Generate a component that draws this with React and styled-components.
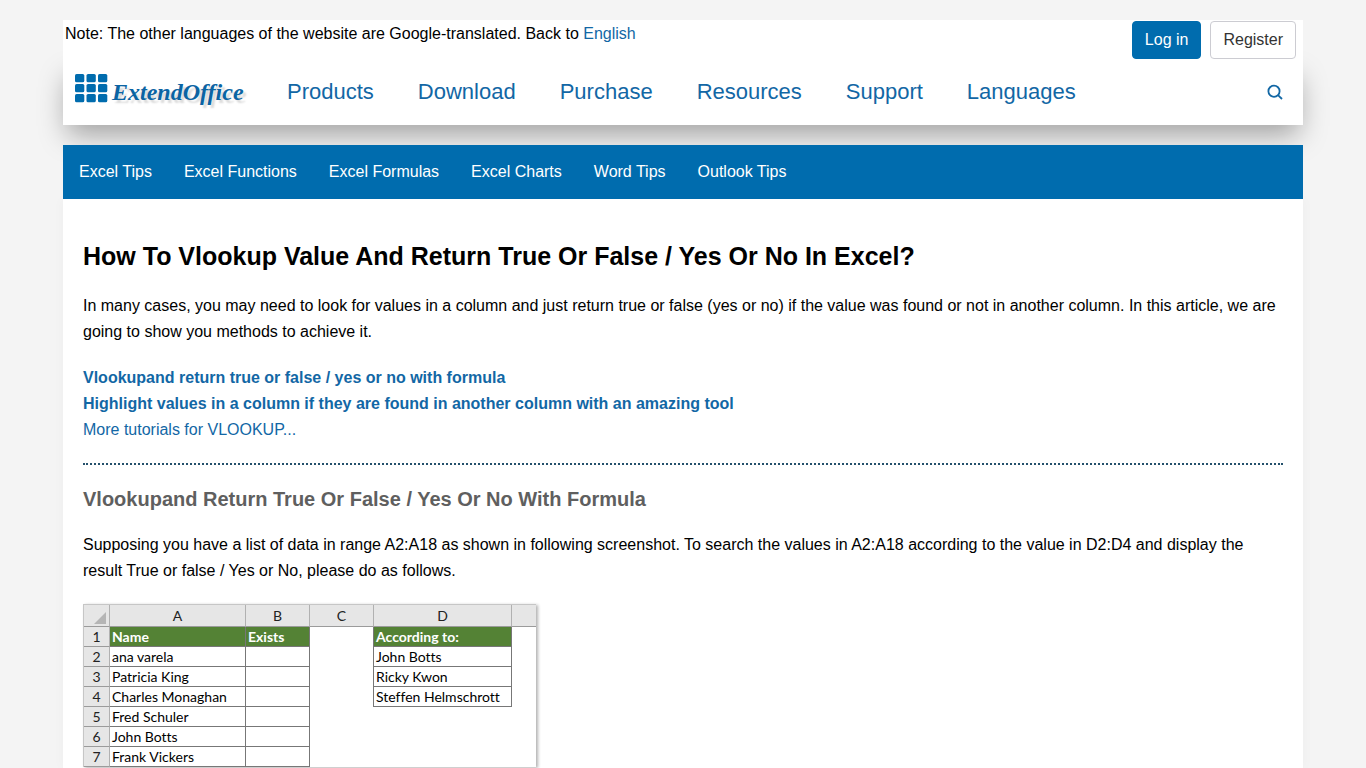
import React from "react";
import styled, { createGlobalStyle, css } from "styled-components";

const GlobalStyle = createGlobalStyle`
  * {
    box-sizing: border-box;
  }
  body {
    margin: 0;
    background-color: #f4f4f4;
    color: #000;
    font-family: "Liberation Sans", Arial, sans-serif;
    font-size: 16px;
    line-height: 26px;
  }
  a {
    color: #1267a5;
    text-decoration: none;
  }
`;

const Page = styled.div`
  width: calc(100% - 40px);
  max-width: 1240px;
  margin: 20px auto 0;
`;

const TopBar = styled.div`
  position: relative;
  display: flex;
  justify-content: space-between;
  height: 40px;
  padding: 1px 7px 1px 2px;
  background-color: #fff;
`;

const Note = styled.p`
  margin: 0;
`;

const Account = styled.div`
  display: flex;
  gap: 9px;
`;

const AccountButton = styled.button`
  padding: 0 12px;
  border: 1px solid #ccccd2;
  border-radius: 4px;
  background-color: #fff;
  color: #333;
  font: inherit;
  cursor: pointer;
  ${props =>
    props.$primary &&
    css`
      border-color: #006cae;
      background-color: #006cae;
      color: #fff;
    `}
`;

const Header = styled.header`
  display: flex;
  align-items: center;
  height: 65px;
  padding: 0 20px 2px 12px;
  background-color: #fff;
  box-shadow: 0 14px 28px -4px rgba(0, 0, 0, 0.34);
`;

const Logo = styled.a`
  display: flex;
  align-items: flex-start;
  gap: 4px;
  width: 169px;
  height: 36px;
  margin-right: 43px;
`;

const LogoText = styled.span`
  padding-top: 5px;
  color: #0b64a3;
  font-family: "Liberation Serif", serif;
  font-size: 24px;
  font-style: italic;
  font-weight: bold;
  text-shadow: 3px 3px 2px rgba(0, 0, 0, 0.15);
`;

const MainNav = styled.nav`
  display: flex;
  flex: 1;
  gap: 44px;
  font-size: 22px;
`;

const SearchButton = styled.button`
  display: flex;
  padding: 0;
  border: 0;
  background: none;
  color: #1267a5;
  cursor: pointer;
`;

const SubNav = styled.nav`
  position: relative;
  display: flex;
  align-items: center;
  gap: 32px;
  height: 54px;
  margin-top: 20px;
  padding: 0 16px;
  background-color: #006cae;
  a {
    color: #fff;
  }
`;

const Article = styled.main`
  min-height: calc(100vh - 199px);
  padding: 40px 20px 0;
  background-color: #fff;
  box-shadow: 0 0 12px rgba(0, 0, 0, 0.03);
`;

const Title = styled.h1`
  margin: 0 0 20px;
  font-size: 25px;
  line-height: 34px;
`;

const SubTitle = styled.h2`
  margin: 0 0 20px;
  color: #5f5f5f;
  font-size: 20px;
  line-height: 26px;
`;

const Paragraph = styled.p`
  margin: 0 0 20px;
`;

const Contents = styled.ul`
  margin: 0 0 20px;
  padding: 0;
  list-style: none;
`;

const Divider = styled.hr`
  margin: 0 0 21px;
  border: 0;
  border-top: 2px dotted #24506b;
`;

const Sheet = styled.table`
  width: 453px;
  border-top: 1px solid #c6c6c6;
  border-left: 1px solid #c6c6c6;
  border-spacing: 0;
  table-layout: fixed;
  box-shadow: 2px 1px 3px rgba(0, 0, 0, 0.3);
  font-family: Lato, "Open Sans", sans-serif;
  font-size: 14px;
  font-variant-ligatures: none;
  line-height: 19px;
`;

const HeadCell = styled.th`
  padding: 0;
  border-right: 1px solid #b1b1b1;
  border-bottom: 1px solid #9b9b9b;
  background-color: #e6e6e6;
  color: #222;
  font-weight: normal;
  line-height: ${props => (props.scope === "col" ? "21px" : "19px")};
  &:last-child {
    border-right: 0;
  }
  svg {
    display: block;
    margin: 4px 3px 0 auto;
  }
`;

const Cell = styled.td`
  height: 20px;
  padding: 0 0 0 2px;
  white-space: nowrap;
  ${props =>
    props.$grid &&
    css`
      border-right: 1px solid #777;
      border-bottom: 1px solid #777;
    `}
  ${props =>
    props.$edge &&
    css`
      border-right: 1px solid #777;
    `}
  ${props =>
    props.$title &&
    css`
      background-color: #548235;
      color: #fff;
      font-weight: bold;
    `}
`;

const products = [
  "Products",
  "Download",
  "Purchase",
  "Resources",
  "Support",
  "Languages"
];

const tips = [
  "Excel Tips",
  "Excel Functions",
  "Excel Formulas",
  "Excel Charts",
  "Word Tips",
  "Outlook Tips"
];

const columns = [
  { name: "A", width: 136 },
  { name: "B", width: 64 },
  { name: "C", width: 64 },
  { name: "D", width: 138 },
  { name: "", width: 24 }
];

const rows = [
  ["Name", "Exists", "According to:"],
  ["ana varela", "", "John Botts"],
  ["Patricia King", "", "Ricky Kwon"],
  ["Charles Monaghan", "", "Steffen Helmschrott"],
  ["Fred Schuler", "", ""],
  ["John Botts", "", ""],
  ["Frank Vickers", "", ""]
];

const LogoMark = () => (
  <svg width="33" height="29" viewBox="0 0 33 29" fill="#006cae" aria-hidden="true">
    {[0, 10, 20].map(y =>
      [0, 11.5, 23].map(x => (
        <rect key={x + "-" + y} x={x} y={y} width="9.3" height="8.3" rx="1.6" />
      ))
    )}
  </svg>
);

const SearchIcon = () => (
  <svg width="16" height="16" viewBox="0 0 16 16" fill="none" stroke="currentColor" strokeWidth="1.8">
    <circle cx="7" cy="7.2" r="5.6" />
    <path d="M11 11.2l4 3.8" />
  </svg>
);

function Spreadsheet() {
  return (
    <Sheet>
      <colgroup>
        <col style={{ width: 26 }} />
        {columns.map((column, i) => (
          <col key={i} style={{ width: column.width }} />
        ))}
      </colgroup>
      <thead>
        <tr>
          <HeadCell scope="col">
            <svg width="12" height="12" viewBox="0 0 12 12" fill="#b5b5b5" aria-hidden="true">
              <path d="M12 0v12H0z" />
            </svg>
          </HeadCell>
          {columns.map((column, i) => (
            <HeadCell key={i} scope="col">
              {column.name}
            </HeadCell>
          ))}
        </tr>
      </thead>
      <tbody>
        {rows.map(([name, exists, according], i) => (
          <tr key={name}>
            <HeadCell scope="row">{i + 1}</HeadCell>
            <Cell $grid $title={i === 0}>
              {name}
            </Cell>
            <Cell $grid $title={i === 0}>
              {exists}
            </Cell>
            <Cell $edge={i < 4} />
            <Cell $grid={i < 4} $title={i === 0}>
              {according}
            </Cell>
            <Cell />
          </tr>
        ))}
      </tbody>
    </Sheet>
  );
}

function App() {
  return (
    <>
      <GlobalStyle />
      <Page>
        <TopBar>
          <Note>
            Note: The other languages of the website are Google-translated. Back
            to <a href="#english">English</a>
          </Note>
          <Account>
            <AccountButton $primary>Log in</AccountButton>
            <AccountButton>Register</AccountButton>
          </Account>
        </TopBar>
        <Header>
          <Logo href="#home">
            <LogoMark />
            <LogoText>ExtendOffice</LogoText>
          </Logo>
          <MainNav>
            {products.map(item => (
              <a key={item} href="#menu">
                {item}
              </a>
            ))}
          </MainNav>
          <SearchButton aria-label="Search">
            <SearchIcon />
          </SearchButton>
        </Header>
        <SubNav>
          {tips.map(item => (
            <a key={item} href="#tips">
              {item}
            </a>
          ))}
        </SubNav>
        <Article>
          <Title>
            How To Vlookup Value And Return True Or False / Yes Or No In Excel?
          </Title>
          <Paragraph>
            In many cases, you may need to look for values in a column and just
            return true or false (yes or no) if the value was found or not in
            another column. In this article, we are going to show you methods to
            achieve it.
          </Paragraph>
          <Contents>
            <li>
              <a href="#formula">
                <b>Vlookupand return true or false / yes or no with formula</b>
              </a>
            </li>
            <li>
              <a href="#tool">
                <b>
                  Highlight values in a column if they are found in another
                  column with an amazing tool
                </b>
              </a>
            </li>
            <li>
              <a href="#more">More tutorials for VLOOKUP...</a>
            </li>
          </Contents>
          <Divider />
          <SubTitle id="formula">
            Vlookupand Return True Or False / Yes Or No With Formula
          </SubTitle>
          <Paragraph>
            Supposing you have a list of data in range A2:A18 as shown in
            following screenshot. To search the values in A2:A18 according to
            the value in D2:D4 and display the result True or false / Yes or No,
            please do as follows.
          </Paragraph>
          <Spreadsheet />
        </Article>
      </Page>
    </>
  );
}

export default App;
